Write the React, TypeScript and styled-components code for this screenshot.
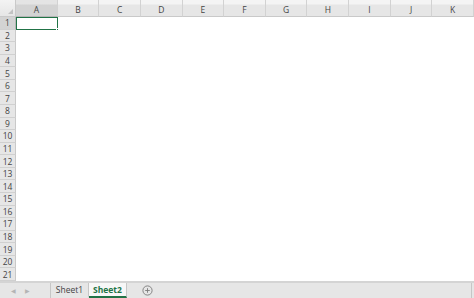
import { FC } from "react";
import styled, { createGlobalStyle } from "styled-components";

const GlobalStyle = createGlobalStyle`
  html, body {
    margin: 0;
    padding: 0;
    background: #fff;
    overflow: hidden;
  }
  body {
    font-family: "Open Sans", "Noto Sans", "Liberation Sans", sans-serif;
  }
`;

const COLUMNS = ["A", "B", "C", "D", "E", "F", "G", "H", "I", "J", "K"];
const ROWS = Array.from({ length: 21 }, (_, i) => i + 1);

const Window = styled.div`
  display: flex;
  flex-direction: column;
  height: 298px;
  width: 474px;
`;

const Sheet = styled.div`
  display: grid;
  flex: 1;
  grid-template-columns: 16px repeat(11, 1fr);
  grid-template-rows: 17px repeat(21, 1fr);
`;

const Corner = styled.div`
  background: linear-gradient(#f3f3f3, #e6e6e6);
  border-bottom: 1px solid #c9c9c9;
  border-right: 1px solid #c9c9c9;
  position: relative;

  &::after {
    border-bottom: 5px solid #c2c2c2;
    border-left: 5px solid transparent;
    bottom: 2px;
    content: "";
    position: absolute;
    right: 2px;
  }
`;

const ColHead = styled.div<{ $active?: boolean }>`
  align-items: flex-end;
  background: ${(p) =>
    p.$active
      ? "linear-gradient(#e4e4e4 0, #e4e4e4 4px, #d3d3d3 5px)"
      : "linear-gradient(#f4f4f4 0, #f4f4f4 4px, #e6e6e6 5px)"};
  border-bottom: 1px solid ${(p) => (p.$active ? "#b5b5b5" : "#c9c9c9")};
  border-right: 1px solid #d2d2d2;
  color: #444;
  display: flex;
  font-size: 8.5px;
  justify-content: center;
  padding-bottom: 1px;
`;

const RowHead = styled.div<{ $active?: boolean }>`
  align-items: center;
  background: ${(p) => (p.$active ? "#d3d3d3" : "#e6e6e6")};
  border-bottom: 1px solid #d0d0d0;
  border-right: 1px solid ${(p) => (p.$active ? "#b5b5b5" : "#c9c9c9")};
  color: #444;
  display: flex;
  font-size: 8.5px;
  justify-content: center;
`;

const Cell = styled.div<{ $selected?: boolean }>`
  background: #fff;
  box-sizing: border-box;
  position: relative;
  ${(p) =>
    p.$selected &&
    `
    border: 1px solid #217346;
    &::after {
      background: #217346;
      border: 1px solid #fff;
      bottom: -3px;
      content: "";
      height: 2px;
      position: absolute;
      right: -3px;
      width: 2px;
    }
  `}
`;

const TabBar = styled.div`
  align-items: stretch;
  background: #e6e6e6;
  border-top: 2px solid #d4d4d4;
  display: flex;
  height: 15px;
`;

const NavArrows = styled.div`
  align-items: center;
  border-right: 1px solid #c6c6c6;
  color: #b4b4b4;
  display: flex;
  font-size: 6px;
  gap: 9px;
  padding: 0 0 0 11px;
  width: 39px;
`;

const Tab = styled.div<{ $active?: boolean }>`
  align-items: center;
  background: ${(p) => (p.$active ? "#f7f7f7" : "transparent")};
  border-bottom: 2px solid ${(p) => (p.$active ? "#217346" : "transparent")};
  border-right: 1px solid #c6c6c6;
  color: ${(p) => (p.$active ? "#217346" : "#444")};
  display: flex;
  font-size: 8.5px;
  font-weight: ${(p) => (p.$active ? 700 : 400)};
  justify-content: center;
  width: 37px;
`;

const AddSheet = styled.div`
  align-items: center;
  display: flex;
  padding-left: 15px;
`;

const Spacer = styled.div`
  border-right: 1px solid #c6c6c6;
  flex: 1;
  margin-right: 2px;
`;

const PlusIcon: FC = () => (
  <svg width="11" height="11" viewBox="0 0 11 11">
    <circle cx="5.5" cy="5.5" r="4.6" fill="none" stroke="#7a7a7a" strokeWidth="0.9" />
    <path d="M5.5 3.2v4.6M3.2 5.5h4.6" stroke="#7a7a7a" strokeWidth="0.9" />
  </svg>
);

const Row: FC<{ row: number }> = ({ row }) => (
  <>
    <RowHead $active={row === 1}>{row}</RowHead>
    {COLUMNS.map((c) => (
      <Cell key={c} $selected={row === 1 && c === "A"} />
    ))}
  </>
);

export default function App() {
  return (
    <>
      <GlobalStyle />
      <Window>
        <Sheet>
          <Corner />
          {COLUMNS.map((c) => (
            <ColHead key={c} $active={c === "A"}>
              {c}
            </ColHead>
          ))}
          {ROWS.map((r) => (
            <Row key={r} row={r} />
          ))}
        </Sheet>
        <TabBar>
          <NavArrows>
            <span>◀</span>
            <span>▶</span>
          </NavArrows>
          <Tab>Sheet1</Tab>
          <Tab $active>Sheet2</Tab>
          <AddSheet>
            <PlusIcon />
          </AddSheet>
          <Spacer />
        </TabBar>
      </Window>
    </>
  );
}
